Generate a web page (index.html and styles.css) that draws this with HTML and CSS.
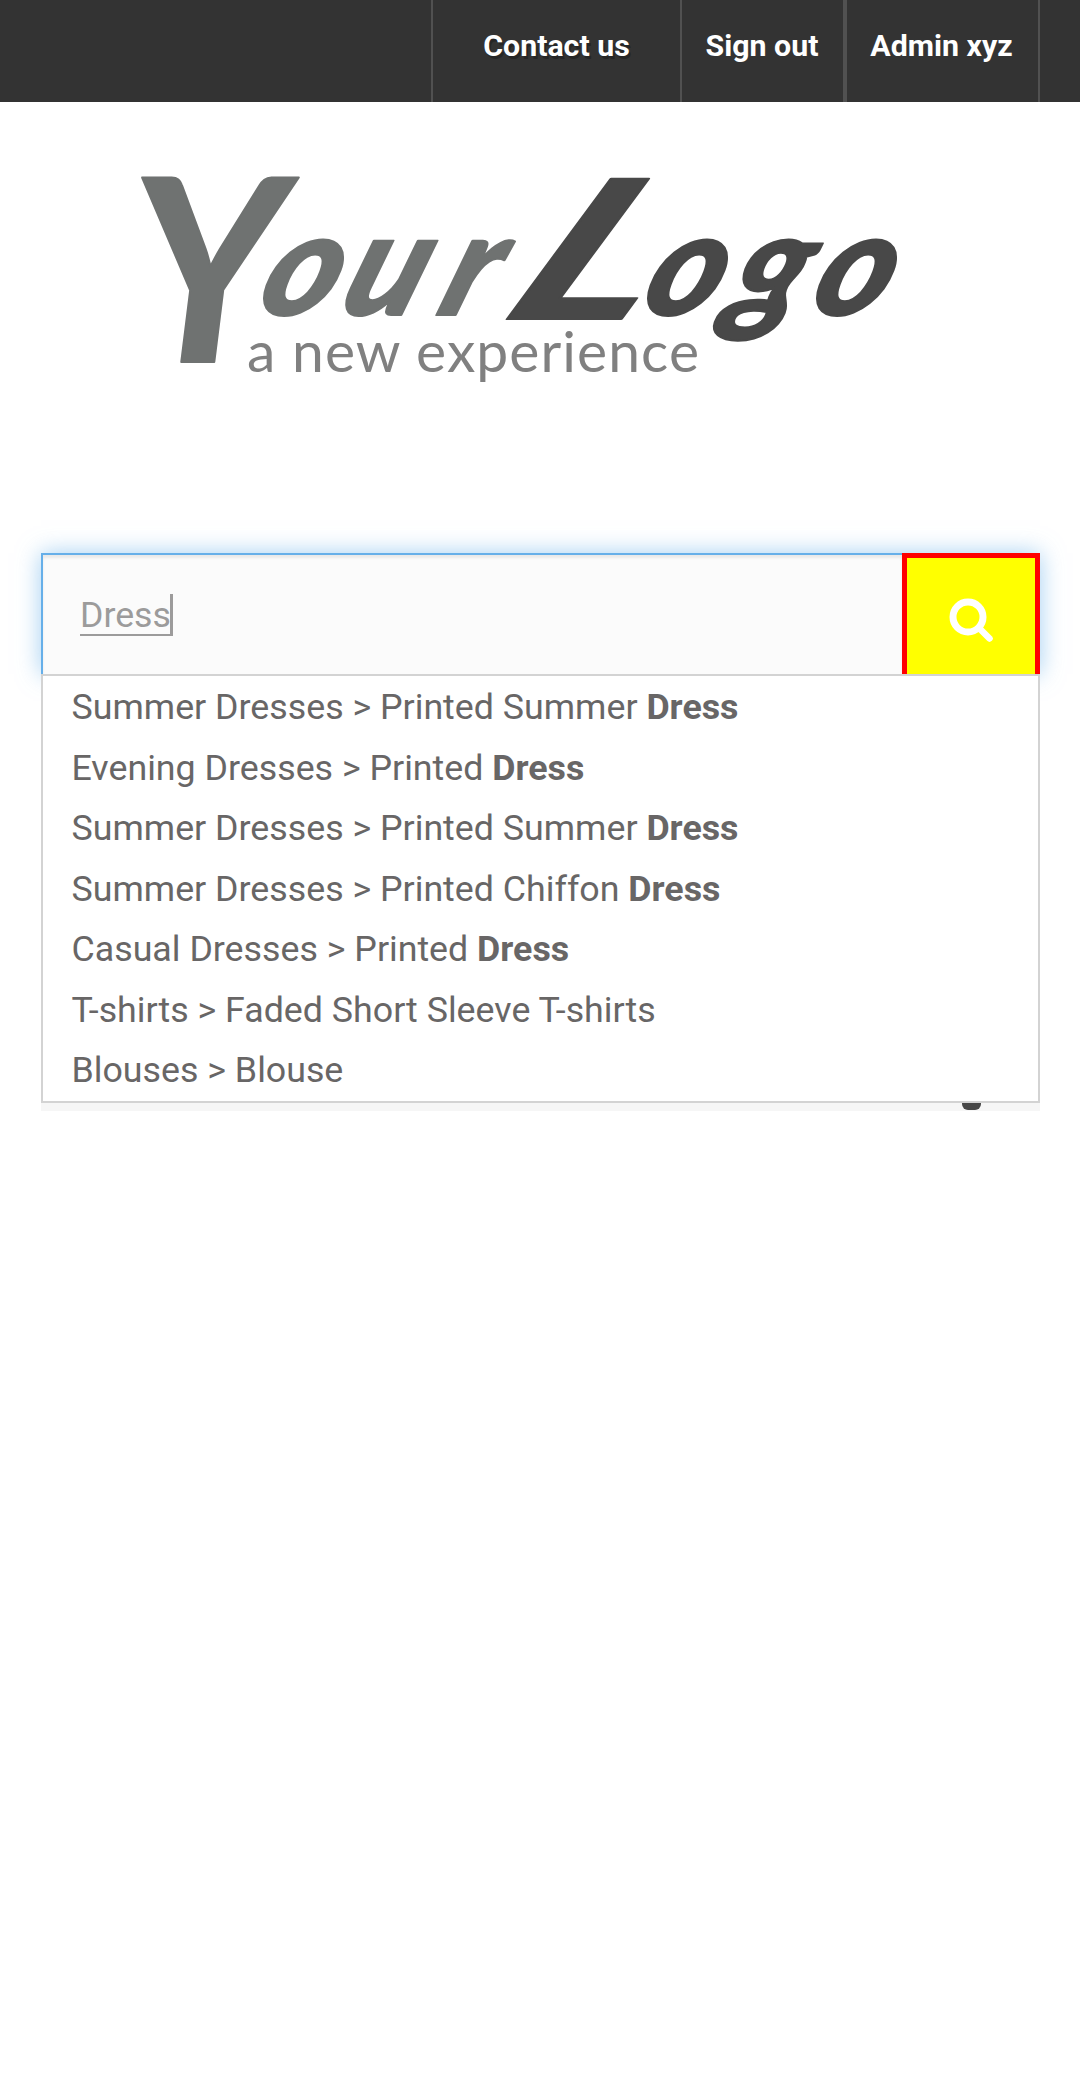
FILE: index.html
```html
<!DOCTYPE html>
<html lang="en">
<head>
<meta charset="utf-8">
<title>Your Logo - Search</title>
<link rel="stylesheet" href="styles.css">
</head>
<body>
<nav class="topbar">
  <a class="topbar-link contact">Contact us</a>
  <a class="topbar-link signout">Sign out</a>
  <a class="topbar-link account">Admin xyz</a>
</nav>
<main class="page">
  <svg class="logo" viewBox="41 102 999 400" width="999" height="400">
    <g class="logo-word">
      <g class="logo-your">
        <text class="big-y" transform="translate(130 362)">Y</text>
        <text transform="translate(0 315) skewX(-20)" x="253 336 434">our</text>
      </g>
      <g class="logo-name">
        <text class="big-l" transform="translate(496 319) skewX(-29) scale(1.5 1)">L</text>
        <text transform="translate(0 315) skewX(-20)" x="637 722 806">ogo</text>
      </g>
    </g>
    <text class="logo-tagline" x="247" y="372" textLength="452">a new experience</text>
  </svg>
  <section class="search">
    <form class="search-form">
      <div class="search-field"><span class="typed">Dress</span></div>
      <div class="search-button">
        <svg width="46" height="46" viewBox="0 0 46 46" fill="none" stroke="#fff"><circle cx="20" cy="20" r="15" stroke-width="7"/><path d="M31 31L41.500 41.500" stroke-width="6.500" stroke-linecap="round"/></svg>
      </div>
    </form>
    <ul class="results">
      <li>Summer Dresses &gt; Printed Summer <strong>Dress</strong></li>
      <li>Evening Dresses &gt; Printed <strong>Dress</strong></li>
      <li>Summer Dresses &gt; Printed Summer <strong>Dress</strong></li>
      <li>Summer Dresses &gt; Printed Chiffon <strong>Dress</strong></li>
      <li>Casual Dresses &gt; Printed <strong>Dress</strong></li>
      <li>T-shirts &gt; Faded Short Sleeve T-shirts</li>
      <li>Blouses &gt; Blouse</li>
    </ul>
    <div class="menu-edge"><span class="menu-mark"></span></div>
  </section>
</main>
</body>
</html>
```
FILE: styles.css
```css
* { box-sizing: border-box; }
body { margin: 0; min-height: 2082px; background: #fff; font-family: Roboto, sans-serif; }
.topbar { display: flex; justify-content: flex-end; height: 102px; padding-right: 40px; background: #333; }
.topbar-link { padding-top: 28px; border-right: 2px solid #515151; color: #fff; font-size: 30.300px; font-weight: 700; line-height: 36px; text-align: center; white-space: nowrap; }
.contact { width: 251px; border-left: 2px solid #515151; text-shadow: 2px 3px 0 rgba(0,0,0,.25); }
.signout { width: 165px; padding-right: 1px; border-right-width: 4px; }
.account { width: 193px; padding-right: 2px; }
.page { padding: 0 40px 0 41px; }
.logo { display: block; overflow: visible; }
.logo-word { font-family: Lato, sans-serif; font-size: 144px; font-weight: 900; font-style: italic; stroke-linejoin: round; stroke-width: 2px; }
.logo-your { fill: #6f7271; stroke: #6f7271; }
.logo-name { fill: #484848; stroke: #484848; }
.big-y { font-size: 255px; font-weight: 700; }
.big-l { font-size: 194px; font-weight: 700; }
.logo-tagline { fill: #808080; font-family: Lato, sans-serif; font-size: 57px; font-weight: 400; }
.search { margin-top: 51px; }
.search-form { display: flex; height: 121px; box-shadow: 0 0 22px rgba(102,175,233,.6); }
.search-field { flex: 1; padding: 39px 0 0 38px; border-top: 2px solid #66afe9; border-left: 2px solid #66afe9; background: #fbfbfb; box-shadow: inset 0 3px 3px rgba(0,0,0,.075); color: #9c9b9b; font-size: 35.700px; line-height: 43px; }
.typed { display: inline-block; width: 93px; height: 42px; margin-left: -1px; border-right: 3px solid #9c9b9b; border-bottom: 2px solid #9c9b9b; }
.search-button { display: flex; align-items: flex-start; width: 138px; padding: 39px 0 0 41px; border: 5px solid red; border-bottom: 0; background: #ff0; }
.results { position: relative; height: 429px; margin: 0; padding: 1px 0 0 28.500px; border: 2px solid #d3d3d3; background: #fff; list-style: none; color: #686666; font-size: 35.750px; line-height: 60.500px; }
.menu-edge { height: 8px; padding-left: 921px; background: #f6f6f6; }
.menu-mark { display: block; width: 19px; height: 7px; border-radius: 0 0 6px 6px; background: #484848; }
```
